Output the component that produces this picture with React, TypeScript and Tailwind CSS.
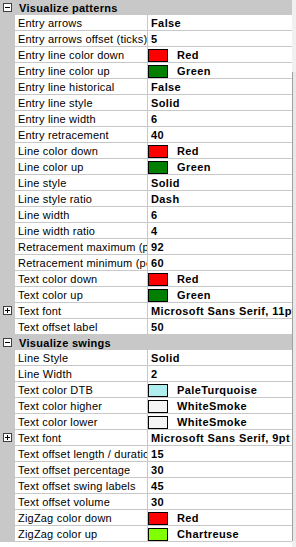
type Prop = { label: string; value: string; swatch?: string; expand?: boolean };

const patterns: Prop[] = [
  { label: 'Entry arrows', value: 'False' },
  { label: 'Entry arrows offset (ticks)', value: '5' },
  { label: 'Entry line color down', value: 'Red', swatch: '#ff0000' },
  { label: 'Entry line color up', value: 'Green', swatch: '#008000' },
  { label: 'Entry line historical', value: 'False' },
  { label: 'Entry line style', value: 'Solid' },
  { label: 'Entry line width', value: '6' },
  { label: 'Entry retracement', value: '40' },
  { label: 'Line color down', value: 'Red', swatch: '#ff0000' },
  { label: 'Line color up', value: 'Green', swatch: '#008000' },
  { label: 'Line style', value: 'Solid' },
  { label: 'Line style ratio', value: 'Dash' },
  { label: 'Line width', value: '6' },
  { label: 'Line width ratio', value: '4' },
  { label: 'Retracement maximum (percent)', value: '92' },
  { label: 'Retracement minimum (percent)', value: '60' },
  { label: 'Text color down', value: 'Red', swatch: '#ff0000' },
  { label: 'Text color up', value: 'Green', swatch: '#008000' },
  { label: 'Text font', value: 'Microsoft Sans Serif, 11pt', expand: true },
  { label: 'Text offset label', value: '50' },
];

const swings: Prop[] = [
  { label: 'Line Style', value: 'Solid' },
  { label: 'Line Width', value: '2' },
  { label: 'Text color DTB', value: 'PaleTurquoise', swatch: '#afeeee' },
  { label: 'Text color higher', value: 'WhiteSmoke', swatch: '#f5f5f5' },
  { label: 'Text color lower', value: 'WhiteSmoke', swatch: '#f5f5f5' },
  { label: 'Text font', value: 'Microsoft Sans Serif, 9pt', expand: true },
  { label: 'Text offset length / duration', value: '15' },
  { label: 'Text offset percentage', value: '30' },
  { label: 'Text offset swing labels', value: '45' },
  { label: 'Text offset volume', value: '30' },
  { label: 'ZigZag color down', value: 'Red', swatch: '#ff0000' },
  { label: 'ZigZag color up', value: 'Chartreuse', swatch: '#7fff00' },
];

function Toggle({ open }: { open: boolean }) {
  return (
    <div className="relative w-[9px] h-[9px] border border-[#404040] bg-white">
      <div className="absolute left-[1px] top-[3px] w-[5px] h-px bg-black" />
      {!open && <div className="absolute left-[3px] top-[1px] w-px h-[5px] bg-black" />}
    </div>
  );
}

function Header({ title }: { title: string }) {
  return (
    <div className="flex h-[15px] bg-[#c8c8c8]">
      <div className="w-[15px] pl-[3px] pt-[3px]">
        <Toggle open />
      </div>
      <div className="pl-[4px] text-[11px] font-bold leading-[15px] pt-px tracking-[0.3px] text-black">{title}</div>
    </div>
  );
}

function Row({ p }: { p: Prop }) {
  return (
    <div className="flex h-4">
      <div className="w-[15px] shrink-0 bg-[#c8c8c8] pl-[3px] pt-[3px]">
        {p.expand && <Toggle open={false} />}
      </div>
      <div className="w-[133px] shrink-0 overflow-hidden whitespace-nowrap border-b border-r border-[#c8c8c8] pl-[3px] pt-px text-[11px] leading-[14px] tracking-[0.2px] text-black">
        {p.label}
      </div>
      <div className="flex w-[144px] shrink-0 overflow-hidden whitespace-nowrap border-b border-[#c8c8c8] pt-px text-[11px] font-bold leading-[14px] tracking-[0.4px] text-black">
        {p.swatch ? (
          <>
            <div className="mt-px h-[13px] w-[20px] shrink-0 border border-black" style={{ backgroundColor: p.swatch }} />
            <span className="pl-[9px]">{p.value}</span>
          </>
        ) : (
          <span className="pl-[3px]">{p.value}</span>
        )}
      </div>
    </div>
  );
}

export default function App() {
  return (
    <div className="flex w-[296px] h-[547px] bg-white overflow-hidden" style={{ fontFamily: '"Liberation Sans", Arial, sans-serif' }}>
      <div className="w-[292px] shrink-0">
        <Header title="Visualize patterns" />
        {patterns.map((p) => (
          <Row key={'a' + p.label} p={p} />
        ))}
        <Header title="Visualize swings" />
        {swings.map((p) => (
          <Row key={'b' + p.label} p={p} />
        ))}
      </div>
      <div className="flex w-[4px] flex-col bg-[#f0f0f0]">
        <div className="h-[72px]" />
        <div className="h-[469px] border-l border-[#a0a0a0] bg-[#e8e8e8]" />
      </div>
    </div>
  );
}
